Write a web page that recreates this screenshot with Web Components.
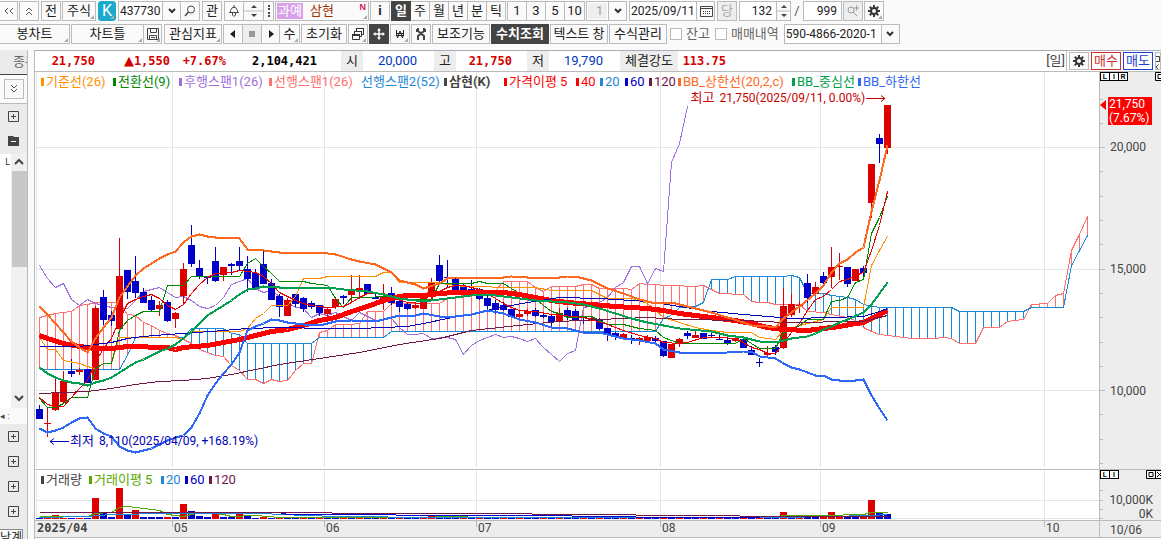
<!DOCTYPE html>
<html lang="ko">
<head>
<meta charset="utf-8">
<title>차트 - 삼현</title>
<style>
html, body { height: 100%; }
body { margin: 0; background: #fafafa; overflow: hidden; font: 13px/16px Roboto, "Noto Sans CJK KR", sans-serif; color: #222; }
</style>
</head>
<body>
<chart-app></chart-app>
<script>
const define = (name, css, html, init) => customElements.define(name, class extends HTMLElement {
  connectedCallback() {
    if (this.shadowRoot) return;
    const root = this.attachShadow({ mode: 'open' });
    root.innerHTML = `<style>*{box-sizing:border-box}${css}</style>` + (typeof html === 'function' ? html(this) : html);
    if (init) init(this, root);
  }
});

const ICONS = {
  left2: '<path d="M5 3 2 6l3 3M10 3 7 6l3 3" fill="none" stroke="#555"/>',
  up2: '<path d="M3 6l3-3 3 3M3 10l3-3 3 3" fill="none" stroke="#555"/>',
  down2: '<path d="M3 2l3 3 3-3M3 6l3 3 3-3" fill="none" stroke="#555"/>',
  search: '<circle cx="7" cy="4.500" r="3.500" fill="none" stroke="#444"/><path d="M4.500 7 1 11" stroke="#444" stroke-width="1.500"/>',
  searchplus: '<circle cx="4" cy="5" r="3" fill="none" stroke="#999"/><path d="M6 7l4 4M7 3h5M9.500 0.500v5" stroke="#999"/>',
  bell: '<path d="M1 7.500h10M2.500 7V5.500l2-3h3l2 3V7M6 2V0M4.500 8v2l1.500 1.500L7.500 10V8" fill="none" stroke="#444"/>',
  disk: '<path d="M0.500 0.500h11v11h-11zM3.500 0.500v4h6v-4M2.500 11.500v-4h7v4M4 9.500h4" fill="none" stroke="#444"/>',
  prev: '<path d="M8 2v8L3 6z" fill="#222"/>',
  next: '<path d="M4 2v8l5-4z" fill="#222"/>',
  stop: '<path d="M3 3h6v6H3z" fill="#999"/>',
  wins: '<path d="M4.500 3.500v-3h7v6h-2M2.500 6.500v-3h7v5h-2M0.500 6.500h7v5h-7z" fill="none" stroke="#333"/><path d="M0 6h8v2H0zM2 3h8v1H2zM4 0h8v1H4z" fill="#333"/>',
  move: '<path d="M6 1v10M1 6h10" stroke="#fff" stroke-width="1.500"/><path d="M6 0l2 2.500H4zM6 12l2-2.500H4zM0 6l2.500-2v4zM12 6l-2.500-2v4z" fill="#fff"/>',
  won: '<path d="M2.500 2v4l1 4 2-6 0.500-1 0.500 1 2 6 1-4V2M2 5.500h8M2 7.500h8" fill="none" stroke="#222"/>',
  tools: '<path d="M3 0v3l6 5v4M9 0v3L3 8v4" fill="none" stroke="#444" stroke-width="2"/><path d="M1 1h2v3H1zM9 1h2v3H9z" fill="#444"/>',
  gear: '<circle cx="6" cy="6" r="3" fill="none" stroke="#333" stroke-width="2"/><path d="M6 0v2M6 10v2M0 6h2M10 6h2M1.800 1.800l1.400 1.400M8.800 8.800l1.400 1.400M10.200 1.800 8.800 3.200M3.200 8.800l-1.400 1.400" stroke="#333" stroke-width="2"/>',
  cal: '<path d="M0.500 1.500h12v10h-12zM0.500 3.500h12" fill="none" stroke="#444"/><path d="M3 6.500h1m1 0h1m1 0h1m1 0h1M3 8.500h1m1 0h1m1 0h1m1 0h1" stroke="#444"/>',
  chev: '<path d="M3 4l3 3 3-3" fill="none" stroke="#333" stroke-width="2"/>',
  up: '<path d="M2 8l4-4 4 4" fill="none" stroke="#444" stroke-width="2"/>',
  down: '<path d="M2 4l4 4 4-4" fill="none" stroke="#444" stroke-width="2"/>',
  dots: '<path d="M5 0h2v2H5zM5 3h2v2H5zM5 7h2v2H5zM5 10h2v2H5z" fill="#444"/>',
  tri2: '<path d="M6 0l3 3H3zM6 12l3-3H3z" fill="#444"/><path d="M-4 6h20" stroke="#bbb"/>',
  plus: '<path d="M0.500 0.500h10v10h-10zM5.500 3v5M3 5.500h5" fill="none" stroke="#444"/>',
  minus: '<path d="M0 0h5l1 1h5v9H0z" fill="#444"/><path d="M3 5.500h5" stroke="#fff"/>',
  max: '<path d="M0.500 0.500h9v8h-9z" fill="#fff" stroke="#000"/><path d="M3 2.500h4v4H3z" fill="none" stroke="#000"/>',
  arrange: '<path d="M1.500 1.500h6v5h-6M1.500 9.500l5 5M6.500 9.500l-5 5" fill="none" stroke="#444"/>'
};
const icon = n => `<svg width="12" height="12" viewBox="0 0 12 12" overflow="visible" aria-hidden="true">${ICONS[n]}</svg>`;

define('tool-button', `
:host{display:block;flex:none;width:var(--w,20px);height:20px}
button{width:100%;height:100%;margin:0;padding:0;border:1px solid #bbb;background:#fafafa;font:inherit;color:inherit;display:flex;align-items:center;justify-content:center;position:relative;white-space:nowrap;overflow:hidden}
:host([on]) button{background:#444;border-color:#444;color:#fff;font-weight:700}
:host([cyan]) button{background:#1aabcc;border-color:#1aabcc;border-radius:3px;color:#fff;font-size:16px}
:host([off]) button{background:#eee;color:#aaa}
:host([joined]) button{border-left:0}
:host([more]) button::after{content:"";position:absolute;right:1px;bottom:1px;border:2px solid;border-color:transparent #aaa #aaa transparent}
:host([buy]) button{border-color:#d03030;color:#d03030;background:#fff}
:host([sell]) button{border-color:#2040d0;color:#2040d0;background:#fff}
:host([low]) button{height:18px;margin-top:1px}`,
  el => `<button type="button" aria-label="${el.getAttribute('label') || el.textContent}">${el.getAttribute('icon') ? icon(el.getAttribute('icon')) : ''}<slot></slot></button>`,
  el => el.style.setProperty('--w', (el.getAttribute('w') || 20) + 'px'));

define('text-field', `
:host{display:flex;flex:none;width:var(--w);height:20px;border:1px solid #bbb;background:#fff}
input{flex:1;min-width:0;width:0;border:0;margin:0;padding:0 1px;background:none;font:inherit;font-size:12px;color:#222;outline:0}
:host([end]) input{text-align:right;padding-right:4px}
:host([off]) input{background:#eee;color:#999;margin:1px}
button{flex:none;width:18px;padding:0;border:0;border-left:1px solid #bbb;background:#fafafa;display:flex;align-items:center;justify-content:center;overflow:hidden}
:host([spin]) button{width:14px}`,
  el => `<input type="text" aria-label="${el.getAttribute('label')}" value="${el.getAttribute('value')}">` + (el.getAttribute('icon') ? `<button type="button" aria-label="열기">${icon(el.getAttribute('icon'))}</button>` : ''),
  el => el.style.setProperty('--w', el.getAttribute('w') + 'px'));

define('check-box', `
:host{display:block;flex:none}
label{display:flex;align-items:center;gap:4px;color:#666;white-space:nowrap}
input{appearance:none;width:12px;height:12px;margin:0;border:1px solid #bbb;background:#fff}`,
  '<label><input type="checkbox"><slot></slot></label>');

define('stock-name', `
:host{display:flex;flex:none;width:94px;height:20px;border:1px solid #bbb;background:#fafafa;padding:1px;gap:7px;align-items:center;position:relative;color:#a03000}
b{background:#d8a0e8;color:#fff;font-weight:400;height:16px;width:26px;line-height:16px;text-align:center}
sup{position:absolute;right:2px;top:1px;font:700 9px/9px "Liberation Sans",sans-serif;color:#d02050}
:host::after{content:"";position:absolute;right:1px;bottom:1px;border:2px solid;border-color:transparent #aaa #aaa transparent}`,
  '<b>과예</b><span>삼현</span><sup>N</sup>');

define('top-tools', `
:host{display:flex;flex-direction:column;gap:3px;padding-top:1px;height:50px}
div{display:flex;align-items:center;height:20px}
.g{flex:none;width:1px}.g2{flex:none;width:2px}.g3{flex:none;width:3px}.s{width:12px;text-align:center;color:#555}`, `
<div>
<tool-button w="18" joined icon="left2" label="이전"></tool-button><i class="g"></i>
<tool-button icon="up2" label="접기"></tool-button><i class="g2"></i>
<tool-button>전</tool-button><i class="g"></i>
<tool-button w="34" more>주식</tool-button><i class="g2"></i>
<tool-button w="18" cyan more>K</tool-button><i class="g2"></i>
<text-field w="63" label="종목코드" value="437730" icon="chev"></text-field>
<tool-button w="19" joined icon="search" label="검색"></tool-button><i class="g2"></i>
<tool-button>관</tool-button><i class="g2"></i>
<tool-button icon="bell" label="알림"></tool-button>
<tool-button joined icon="tri2" label="위아래"></tool-button>
<tool-button w="10" joined icon="dots" label="더보기"></tool-button><i class="g"></i>
<stock-name></stock-name><i class="g"></i>
<tool-button><b>i</b></tool-button><i class="g"></i>
<tool-button on>일</tool-button><tool-button w="19" joined>주</tool-button><tool-button w="19" joined>월</tool-button><tool-button w="19" joined>년</tool-button><tool-button w="19" joined>분</tool-button><tool-button w="19" joined>틱</tool-button><i class="g"></i>
<tool-button>1</tool-button><tool-button w="19" joined>3</tool-button><tool-button w="19" joined>5</tool-button><tool-button w="20" joined>10</tool-button><i class="g"></i>
<text-field w="41" off end label="간격" value="1" icon="chev"></text-field><i class="g2"></i>
<text-field w="86" label="날짜" value="2025/09/11" icon="cal"></text-field><i class="g2"></i>
<tool-button off>당</tool-button><i class="g2"></i>
<text-field w="52" spin end label="봉 개수" value="132" icon="tri2"></text-field>
<span class="s">/</span>
<text-field w="39" end label="전체 개수" value="999"></text-field><i class="g"></i>
<tool-button off icon="searchplus" label="확대"></tool-button><i class="g"></i>
<tool-button more icon="gear" label="설정"></tool-button>
</div>
<div>
<tool-button w="70" more joined>봉차트</tool-button><i class="g"></i>
<tool-button w="73" more>차트틀</tool-button>
<tool-button w="18" joined more icon="disk" label="저장"></tool-button><i class="g2"></i>
<tool-button w="58" more>관심지표</tool-button><i class="g"></i>
<tool-button icon="prev" label="뒤로"></tool-button>
<tool-button w="19" off joined icon="stop" label="정지"></tool-button>
<tool-button w="18" joined icon="next" label="앞으로"></tool-button>
<tool-button joined more>수</tool-button><i class="g"></i>
<tool-button w="46">초기화</tool-button><i class="g"></i>
<tool-button more icon="wins" label="창 배열"></tool-button><i class="g"></i>
<tool-button on icon="move" label="십자선"></tool-button><i class="g"></i>
<tool-button more icon="won" label="원화"></tool-button><i class="g"></i>
<tool-button icon="tools" label="도구"></tool-button><i class="g"></i>
<tool-button w="58">보조기능</tool-button><i class="g"></i>
<tool-button w="58" on>수치조회</tool-button><i class="g"></i>
<tool-button w="58">텍스트 창</tool-button><i class="g"></i>
<tool-button w="58">수식관리</tool-button><i class="g3"></i>
<check-box>잔고</check-box><i class="g3"></i><i class="g2"></i>
<check-box>매매내역</check-box><i class="g3"></i><i class="g2"></i>
<text-field w="116" label="계좌번호" value="590-4866-2020-1" icon="chev"></text-field>
</div>`);

define('side-rail', `
:host{display:flex;flex-direction:column;width:28px;border-right:1px solid #bbb;background:#ebebeb;overflow:hidden}
.tab{height:25px;flex:none;border-bottom:1px solid #444;padding:4px 0 0 13px;white-space:nowrap;color:#666}
.box{height:29px;flex:none;background:#fafafa;border-bottom:1px solid #bbb;padding:4px}
.ic{height:25px;flex:none;display:flex;align-items:center;justify-content:center}
.list{flex:1;min-height:0;display:flex;background:#fff;color:#333;font-size:9px}
.list span{flex:1;text-align:right;padding-right:1px}
.bar{width:16px;background:#f0f0f0;display:flex;flex-direction:column;align-items:center;gap:3px;padding-top:2px}
.bar i{width:15px;flex:0 1 38%;background:#c8c8c8}
.bar svg:last-child{margin-top:auto;margin-bottom:4px}
.mini{height:16px;flex:none;background:#fafafa;display:flex;align-items:center;font-size:9px;color:#444}
.foot{height:10px;flex:none;margin-top:5px;background:#fafafa;border-top:1px solid #888;border-right:1px solid #888;width:23px;white-space:nowrap;font-size:12px}`, `
<div class="tab">종목</div>
<div class="box"><tool-button icon="down2" label="펼치기"></tool-button></div>
<div class="ic">${icon('plus')}</div><div class="ic">${icon('minus')}</div>
<div class="list"><span>L</span><div class="bar">${icon('up')}<i></i>${icon('down')}</div></div>
<div class="mini">◂ :</div>
<div class="ic">${icon('plus')}</div><div class="ic">${icon('plus')}</div><div class="ic">${icon('plus')}</div><div class="ic">${icon('plus')}</div>
<div class="foot">남계</div>`);

define('quote-bar', `
:host{display:flex;height:20px;background:#fff;line-height:20px;white-space:nowrap;overflow:hidden}
dl{display:flex;margin:0;flex:1;min-width:0}
dt,dd{margin:0;flex:none;text-align:right}
dt{background:#ededed;width:22px;text-align:center;margin:0}
.b{font:700 12px/20px "DejaVu Sans Mono",monospace}
.red{color:#d40000}.blu{color:#0038c0}.blk{color:#000}
.up{font:13px/18px "DejaVu Sans",sans-serif}
.tail{display:flex;gap:2px;align-items:center}
.tail span{border-right:1px solid #bbb;padding-right:1px;color:#444}`, `
<dl><dd class="b red" style="width:60px">21,750</dd><dd class="b red" style="width:75px"><span class="up">▲</span>1,550</dd><dd class="b red" style="width:56px">+7.67%</dd><dd class="b blk" style="width:91px;margin-right:24px">2,104,421</dd>
<dt>시</dt><dd class="blu" style="width:54px;margin-right:17px">20,000</dd>
<dt>고</dt><dd class="b red" style="width:56px;margin-right:15px">21,750</dd>
<dt>저</dt><dd class="blu" style="width:54px;margin-right:17px">19,790</dd>
<dt style="width:58px">체결강도</dt><dd class="b red" style="width:48px">113.75</dd></dl>
<div class="tail"><span>[일]</span><tool-button low icon="gear" label="차트 설정"></tool-button><tool-button low w="30" buy>매수</tool-button><tool-button low w="30" sell>매도</tool-button><tool-button low w="6" icon="arrange" label="창"></tool-button></div>`);

define('legend-row', `
:host{display:flex;position:absolute;left:6px;top:2px;white-space:nowrap}
span{flex:none;display:flex;align-items:center;gap:2px}
span::before{content:"";width:3px;height:8px;background:currentColor}
.n::before{display:none}`,
  el => JSON.parse(el.getAttribute('items')).map(([t, c, w, o]) => `<span class="${o || ''}" style="color:${c};width:${w}px${o === 'b' ? ';font-weight:700' : ''}">${t}</span>`).join(''));

const X0 = 39, STEP = 8;
const S = (s) => { const a = s.trim().split(/\s+/).map(Number), r = []; for (let k = 0; k < a.length; k += 2) r.push([a[k], a[k + 1]]); return r; };
const at = (pts, i) => { for (let k = 1; k < pts.length; k++) if (i <= pts[k][0]) { const [a, b] = [pts[k - 1], pts[k]]; return b[1] + (a[1] - b[1]) * (b[0] - i) / (b[0] - a[0]); } return pts[pts.length - 1][1]; };
const line = (pts, c, w = 1) => `<polyline points="${pts.map(([i, y]) => `${X0 + .5 + i * STEP},${y + .5}`).join(' ')}" fill="none" stroke="${c}" stroke-width="${w}"/>`;

/* index, colour, body top, body bottom, wick top, wick bottom */
const CANDLES = `0b409 419 405 419|1r423 424 408 437|2r392 410 378 411|3r381 402 371 403|4b371 374 359 377|5r370 372 368 375|6b369 383 369 383|7r308 380 306 380|8b297 320 290 325|9b315 321 311 326|10r276 329 238 329|11b270 292 270 299|12b281 293 256 298|13b292 303 288 303|14b300 310 296 312|15r305 309 301 316|16b302 321 300 322|17r313 319 312 328|18r269 296 263 304|19b245 264 225 267|20b268 276 260 279|21b277 278 277 284|22b261 281 247 282|23r267 275 267 281|24b264 266 263 275|25b261 266 247 271|26b269 279 256 292|27b273 289 269 289|28b264 284 251 284|29b283 300 279 300|30b296 307 294 317|31r300 316 298 316|32b294 304 294 307|33b298 309 297 312|34b303 307 301 309|35b305 313 305 316|36r309 314 307 317|37r299 307 297 309|38b296 298 295 304|39r290 295 275 302|40r288 291 275 299|41b284 294 284 294|42b297 299 294 299|43r296 301 284 310|44b293 303 287 305|45b301 307 299 312|46b304 309 303 310|47r305 308 303 309|48r298 309 295 309|49r283 292 278 300|50b265 281 255 284|51b277 278 260 287|52b278 290 277 290|53b287 291 283 291|54b289 291 280 295|55b289 299 288 300|56b298 306 295 310|57b303 310 300 314|58b305 310 302 311|59b309 317 309 317|60r314 317 310 321|61r311 314 309 316|62b310 316 308 317|63b315 317 312 318|64b316 322 315 327|65r313 321 308 321|66b310 316 308 320|67b311 320 309 320|68b317 318 316 324|69r318 321 317 321|70b319 329 318 330|71b328 335 328 341|72b333 336 332 340|73r334 338 333 340|74b338 339 335 344|75r338 340 337 345|76r337 341 335 343|77b338 341 336 342|78b341 356 341 357|79r344 358 344 358|80r339 344 338 347|81b333 336 331 339|82r335 338 331 338|83b333 339 333 339|84b335 336 333 337|85b339 340 331 340|86b340 343 337 345|87r338 341 337 342|88b339 348 339 348|89b350 355 346 355|90b362 363 358 367|91r353 355 346 356|92b347 352 345 355|93r306 348 288 349|94r304 315 294 317|95r305 306 301 313|96b283 298 274 303|97r287 294 282 295|98b276 283 272 286|99r267 277 247 288|100r266 267 253 280|101b267 284 267 287|102r269 281 269 281|103b268 273 266 279|104r164 203 164 218|105b138 144 134 163|106r105 148 105 154`;

const SPAN_A = S(`0 317 1 315 2 313 3 312 4 311 5 305 6 304 7 302 9 302 10 303 11 314 12 315 13 322 14 325 15 330 16 333 17 335 18 339 19 343 20 349 21 352 22 355 23 356 24 365 25 370 26 379 27 379 28 383 29 379 30 381 31 380 32 370 33 363 34 363 35 332 36 330 37 324 39 324 40 323 41 311 43 311 44 303 50 303 51 298 53 295 54 293 56 293 57 290 58 281 61 281 62 287 63 291 64 286 67 286 68 284 69 284 70 288 73 288 74 289 75 283 76 284 82 286 83 285 84 289 85 293 88 294 89 301 90 302 91 302 92 304 95 304 96 311 98 312 99 314 101 317 102 320 103 327 104 331 105 334 107 336 108 337 109 338 112 338 113 337 114 338 115 343 117 343 118 327 120 327 121 321 123 319 124 304 126 303 127 295 128 293 129 250 130 234 131 216`);
const SPAN_B = S(`0 369 10 369 11 355 12 337 18 337 19 328 23 328 24 333 25 334 26 343 34 343 35 337 43 337 44 331 77 331 78 318 79 315 80 307 82 306 83 302 84 279 86 279 87 276 93 276 94 275 95 277 96 293 98 293 99 295 101 297 102 299 103 304 105 307 114 307 115 311 123 311 124 307 128 307 129 265 130 250 131 235`);
const LAG = S(`0 265 1 278 2 287 3 283 4 299 5 305 6 299 7 303 8 305 9 307 10 307 11 308 12 300 13 291 14 289 15 287 16 292 17 297 18 296 19 300 20 306 21 308 22 305 23 297 24 284 25 281 26 278 27 288 28 292 29 290 30 296 31 302 32 307 33 308 34 317 35 313 36 315 37 312 38 316 39 320 40 312 41 316 42 320 44 318 45 327 46 334 47 334 48 333 49 338 51 337 52 339 53 354 54 345 55 340 56 337 57 334 58 337 59 336 60 338 61 341 62 338 63 347 64 354 65 361 66 353 67 350 68 307 69 306 70 302 71 297 72 287 73 282 74 266 75 266 76 283 77 268 78 271 79 162 80 143 81 106`);
const TENKAN = S(`0 398 1 407 2 407 3 403 4 397 6 397 7 368 8 363 9 363 10 330 11 320 12 315 13 311 15 311 16 285 18 285 19 276 25 276 26 263 27 258 28 266 29 273 30 281 33 281 34 283 36 285 37 298 38 307 39 297 45 296 46 299 49 299 50 283 54 283 55 281 56 283 58 283 60 293 62 298 63 305 64 311 65 313 66 317 69 316 71 324 73 324 75 328 77 330 78 337 80 343 87 343 88 338 90 348 92 348 93 332 94 330 95 325 96 319 98 319 99 301 100 300 101 297 102 282 103 279 104 233 105 217 106 196`);
const KIJUN = S(`0 337 1 349 2 349 3 360 5 363 6 366 7 368 8 363 9 363 10 337 17 337 18 339 19 331 25 331 26 328 27 318 28 313 29 305 31 305 32 296 33 278 35 278 36 276 42 276 43 272 44 272 45 282 50 282 51 284 53 286 60 287 62 287 64 290 69 290 71 298 74 298 76 303 78 317 80 322 82 327 84 330 86 332 89 332 90 337 92 339 93 330 95 325 98 319 99 307 103 307 104 265 105 250 106 236`);
const MA5 = S(`0 397 1 404 2 406 3 406 4 397 5 388 6 380 7 362 8 348 9 338 10 319 11 303 12 299 13 296 14 294 15 298 16 305 17 309 18 304 19 293 20 284 21 277 22 273 24 272 25 270 26 271 27 272 28 276 29 283 30 292 31 296 32 300 33 303 34 305 36 307 38 306 39 302 40 297 41 293 43 293 44 297 46 302 48 303 49 298 50 291 51 287 52 285 53 285 54 287 55 289 56 293 57 298 58 303 59 307 60 310 62 311 64 314 68 317 69 319 71 324 73 330 75 335 77 338 78 342 80 343 81 342 83 337 85 337 87 338 88 342 89 347 90 349 91 353 92 353 93 343 94 332 95 323 96 310 97 299 98 296 99 289 100 281 101 279 102 275 103 272 104 250 105 225 106 191`);
const MA40 = S(`0 335 1 338 3 343 5 346 7 348 9 348 11 346 16 347 17 349 18 347 21 345 23 342 25 339 27 335 29 331 31 329 33 325 35 320 37 317 39 311 41 306 43 300 45 296 46 295 48 295 50 293 52 292 58 292 60 294 62 297 64 300 66 302 69 304 72 306 76 308 78 310 80 313 83 316 87 320 89 323 91 327 93 329 96 330 98 328 100 326 102 323 103 322 104 318 105 314 106 310`);
const MA60 = S(`0 346 5 346 7 344 9 342 11 338 13 336 16 334 18 333 23 330 26 328 30 327 36 328 40 328 43 327 46 326 48 323 51 318 53 315 56 310 57 308 59 305 61 302 62 301 65 297 70 298 76 301 80 306 84 311 88 314 94 318 99 317 103 316 105 311 106 308`);
const MA120 = S(`0 393 6 391 9 388 12 384 15 381 18 380 21 378 24 374 27 369 30 364 35 358 40 352 45 344 50 338 54 330 61 324 65 321 70 319 76 317 80 319 88 320 93 322 103 321 106 315`);
const BB_UP = S(`0 306 1 314 2 323 3 332 4 341 5 347 6 352 7 338 8 327 9 317 10 297 11 286 12 275 13 268 14 263 15 258 16 254 17 251 18 242 19 236 20 234 21 236 22 237 24 237 25 238 26 249 27 249 28 250 29 251 30 252 35 252 37 254 39 259 40 261 42 264 44 272 45 280 47 284 48 288 50 283 51 278 52 277 56 277 57 278 59 276 61 277 65 277 66 276 67 276 69 280 71 288 73 293 75 299 77 303 79 302 80 304 82 308 84 312 86 317 88 322 89 325 91 326 92 327 93 318 95 306 97 293 98 285 99 272 100 263 101 259 102 252 103 247 104 211 105 180 106 145`);
const BB_MID = S(`0 367 1 373 2 377 3 380 4 382 5 383 6 385 7 382 8 380 9 377 10 372 11 367 12 362 13 359 14 355 15 351 16 348 17 344 18 338 19 331 20 323 21 315 22 310 23 305 24 300 25 294 26 289 27 288 28 286 30 287 36 287 38 289 41 291 43 294 45 298 47 300 48 301 50 299 52 297 54 295 56 294 58 296 60 298 62 300 64 301 66 302 68 304 70 308 72 313 74 318 76 322 78 325 80 328 84 331 86 335 88 337 90 341 92 342 93 340 94 338 96 336 97 333 98 329 99 326 100 322 101 319 103 312 104 304 105 293 106 282`);
const BB_LOW = S(`0 428 1 432 2 430 3 427 4 422 5 418 6 417 7 428 8 433 9 436 10 446 11 450 12 452 13 450 14 448 15 444 16 440 17 437 18 435 19 427 20 413 21 395 22 383 23 373 24 364 25 352 26 330 27 326 28 323 29 319 30 320 31 322 33 324 35 325 37 321 39 320 42 321 43 319 45 315 47 315 48 313 50 316 52 316 54 314 56 310 58 313 60 319 62 322 64 327 66 328 68 332 70 332 71 334 73 338 75 340 77 343 78 349 80 352 83 352 84 353 86 352 88 351 89 351 90 356 92 358 93 363 94 367 95 369 96 372 97 375 98 375 99 379 100 380 102 380 103 379 104 395 105 408 106 420`);
const MONTHS = [172, 324, 476, 660, 820, 1044];
const RED = '#dd0000', BLUE = '#0000c8';

const grid = (y0, y1, ys) => `<g fill="#e6e6e6"><rect x="36" y="${y0}" width="1" height="${y1 - y0}"/>${MONTHS.map(x => `<rect x="${x}" y="${y0}" width="1" height="${y1 - y0}"/>`).join('')}${ys.map(y => `<rect x="36" y="${y}" width="1063" height="1"/>`).join('')}</g>`;

define('price-plot', `
:host{display:block;position:relative;background:#fff;min-height:0;overflow:hidden}
svg{position:absolute;inset:0;width:100%;height:100%}
.note{position:absolute;display:flex;align-items:center;gap:5px;white-space:nowrap}
.note b{font-weight:400;font-size:12px}
.note svg{position:static;width:20px;height:7px;margin:0 -4px}
.hi{right:20%;top:18px;color:#c80000;padding-right:4px}
.lo{left:14px;top:91%;color:#0000b8;padding-left:4px}`, () => {
    let hatch = '';
    for (let i = 0; i <= 131; i++) {
      const a = Math.round(at(SPAN_A, i)), b = Math.round(at(SPAN_B, i));
      hatch += `<rect x="${X0 + i * STEP}" y="${Math.min(a, b)}" width="1" height="${Math.abs(a - b)}" fill="${a < b ? '#ff7070' : '#1e88d8'}"/>`;
    }
    const candles = CANDLES.split('|').map(s => {
      const m = s.match(/^(\d+)([rb])(.*)$/), [t, b, h, l] = m[3].split(' ').map(Number), x = X0 + m[1] * STEP;
      return `<g fill="${m[2] === 'r' ? RED : BLUE}"><rect x="${x}" y="${h}" width="1" height="${l - h}"/><rect x="${x - 3}" y="${t}" width="7" height="${b - t}"/></g>`;
    }).join('');
    return `<svg viewBox="35 72 1064 397" preserveAspectRatio="none" shape-rendering="crispEdges" aria-hidden="true">
${grid(72, 467, [147, 269, 390])}${hatch}${line(SPAN_A, '#ff7070')}${line(SPAN_B, '#1e88d8')}${line(LAG, '#a070e0')}${candles}
${line(KIJUN, '#ff9000')}${line(TENKAN, '#008800')}${line(MA5, '#ee0000')}${line(MA40, '#ff0000', 5)}${line(MA60, '#0000b8')}${line(MA120, '#701848')}
${line(BB_UP, '#ff6820', 2)}${line(BB_MID, '#00a050', 2)}${line(BB_LOW, '#2e68f8', 2)}</svg>
<slot></slot>
<div class="note hi">최고 <b>21,750(2025/09/11, 0.00%)</b><svg viewBox="0 0 20 7"><path d="M0 3.500h19M15 .500l4 3-4 3" fill="none" stroke="#c80000"/></svg></div>
<div class="note lo"><svg viewBox="0 0 20 7"><path d="M20 3.500H1M5 .500l-4 3 4 3" fill="none" stroke="#0000b8"/></svg>최저 <b>8,110(2025/04/09, +168.19%)</b></div>`;
  });

const VOL = { 0: 'b518', 1: 'r518', 2: 'r515', 3: 'r518', 4: 'b518', 5: 'r518', 6: 'b518', 7: 'r498', 8: 'b513', 9: 'b517', 10: 'r488', 11: 'b515', 12: 'r510', 13: 'b517', 14: 'b517', 15: 'b517', 16: 'r517', 17: 'b517', 18: 'r504', 19: 'b511', 20: 'b516', 21: 'b517', 22: 'r513', 23: 'b517', 24: 'b517', 25: 'r514', 26: 'b516', 28: 'r517', 93: 'r512', 99: 'r512', 104: 'r500', 105: 'b513', 106: 'b514', 50: 'b516', 49: 'r515' };
define('volume-plot', `
:host{display:block;position:relative;background:#fff;min-height:0;overflow:hidden}
svg{position:absolute;inset:0;width:100%;height:100%}`, () => {
    let bars = '';
    for (let i = 0; i <= 106; i++) {
      const v = VOL[i] || ((i * 7 % 5 < 2 ? 'r' : 'b') + (i > 88 ? 517 : 518)), y = +v.slice(1);
      bars += `<rect x="${X0 - 3 + i * STEP}" y="${y}" width="7" height="${519 - y}" fill="${v[0] === 'r' ? RED : BLUE}"/>`;
    }
    return `<svg viewBox="35 470 1064 50" preserveAspectRatio="none" shape-rendering="crispEdges" aria-hidden="true">${grid(471, 520, [500, 518])}${bars}
${line(S('0 516 6 516 7 513 9 512 10 507 11 506 13 508 15 510 16 514 18 516 19 514 20 512 23 514 24 516 27 515 30 517 49 517 50 516 53 516 54 517 92 517 93 515 98 515 103 514 104 512 106 512'), '#58a800')}
${line(S('0 517 6 516 9 514 16 513 28 513 30 514 37 516 50 517 93 517 104 515 106 514'), '#1e88d8')}
${line(S('0 512 30 512 31 514 44 514 45 515 66 515 67 516 74 516 75 517 106 516'), '#0000c8')}
${line(S('0 512 36 512 37 513 61 513 62 514 74 514 75 515 87 515 88 516 106 516'), '#701848')}</svg><slot></slot>`;
  });

define('value-axis', `
:host{display:grid;position:relative;background:#ededed;border-left:1px solid #bbb;overflow:hidden;min-height:0;color:#444;font-size:12px;grid-template-rows:var(--rows)}
span{display:flex;align-items:center;padding-left:10px}
:host([vol]) span{justify-content:flex-end;padding:0 8px 0 0;line-height:12px}
.top{position:absolute;left:0;top:0;display:flex}
.top.r{left:auto;right:var(--r);gap:0}
.top b{width:10px;height:9px;margin-right:-1px;border:1px solid #000;background:#fff;color:#000;font:700 7px/7px "Liberation Sans",sans-serif;text-align:center}
.ticks{position:absolute;left:0;top:0;width:5px;height:100%}
.flag{position:absolute;left:0;top:25px;display:flex;align-items:center;gap:2px;color:#fff;line-height:14px}
.flag::before{content:"";border:5px solid transparent;border-right:6px solid #f00;border-left:0;margin-top:-12px}
.flag p{margin:0;background:#f00;width:44px;height:28px;padding-left:1px}`,
  el => {
    const vol = el.hasAttribute('vol');
    const ticks = vol ? [20, 30, 39, 48] : [...Array(16)].map((_, k) => Math.round(26.5 + 24.3 * k));
    return `<svg class="ticks" viewBox="0 0 5 ${vol ? 50 : 397}" preserveAspectRatio="none" aria-hidden="true">${ticks.map(y => `<rect x="0" y="${y}" width="${!vol && Math.abs((y - 75) % 121.500) < 2 ? 5 : 3}" height="1" fill="#bbb"/>`).join('')}</svg>
${vol ? '<i></i><span>10,000K</span><span>0K</span>' : '<i></i><span>20,000</span><span>15,000</span><span>10,000</span><div class="flag"><p>21,750<br>(7.67%)</p></div>'}
<div class="top">${vol ? '<b>L</b><b>I</b>' : '<b>L</b><b>I</b><b>R</b>'}</div><div class="top r"><svg width="16" height="9" aria-hidden="true">${ICONS.max}${vol ? '<path d="M9.500 0.500h9v8h-9z" fill="#fff" stroke="#000"/><path d="M11 2l5 5M16 2l-5 5" stroke="#000"/>' : ''}</svg></div>`;
  }, el => { el.style.setProperty('--rows', el.hasAttribute('vol') ? '23fr 14fr 13fr' : '14fr 122fr 122fr 121fr 18fr'); el.style.setProperty('--r', el.hasAttribute('vol') ? '-1px' : '-10px'); });

define('date-axis', `
:host{display:grid;grid-template-columns:137fr 152fr 152fr 184fr 160fr 224fr 55fr;background:#ededed;color:#444;font-size:12px;line-height:15px;overflow:hidden}
span{padding-left:2px;background:linear-gradient(#bbb,#bbb) 0 0/1px 6px no-repeat;min-width:0}
b{padding-left:2px;font:700 12px/15px "DejaVu Sans Mono",monospace}`,
  '<b>2025/04</b><span>05</span><span>06</span><span>07</span><span>08</span><span>09</span><span>10</span>');

define('chart-board', `
:host{display:grid;min-width:0;border-top:1px solid #aaabb8;border-left:1px solid #bbb;grid-template-columns:minmax(0,1fr) 62px;grid-template-rows:20px minmax(200px,1fr) 50px 16px 1px;row-gap:1px;background:#bbb}
quote-bar{grid-column:1/-1}
.end{background:#ededed;border-left:1px solid #bbb;padding-left:10px;font-size:12px;line-height:18px;color:#444}
.foot{grid-column:1/-1;background:#fafafa}`, `
<quote-bar></quote-bar>
<price-plot><legend-row items='[["기준선(26)","#ff9000",72],["전환선(9)","#008800",66],["후행스팬1(26)","#a070e0",90],["선행스팬1(26)","#ff7070",92],["선행스팬2(52)","#1e88d8",83,"n"],["삼현(K)","#444",60,"b"],["가격이평 5","#f00",72],["40","#f00",24],["20","#1e88d8",25],["60","#0000c8",24],["120","#701848",29],["BB_상한선(20,2,c)","#ff6820",114],["BB_중심선","#00a050",66],["BB_하한선","#2e68f8",66]]'></legend-row></price-plot>
<value-axis></value-axis>
<volume-plot><legend-row items='[["거래량","#444",48],["거래이평 5","#58a800",72],["20","#1e88d8",24],["60","#0000c8",24],["120","#701848",30]]'></legend-row></volume-plot>
<value-axis vol></value-axis>
<date-axis></date-axis><div class="end">10/06</div>
<div class="foot"></div>`);

define('chart-app', `
:host{display:grid;grid-template-rows:50px minmax(0,1fr);height:100vh}
main{display:grid;grid-template-columns:28px minmax(0,1fr);column-gap:6px;min-height:0}`,
  '<top-tools></top-tools><main><side-rail></side-rail><chart-board></chart-board></main>');
</script>
</body>
</html>
